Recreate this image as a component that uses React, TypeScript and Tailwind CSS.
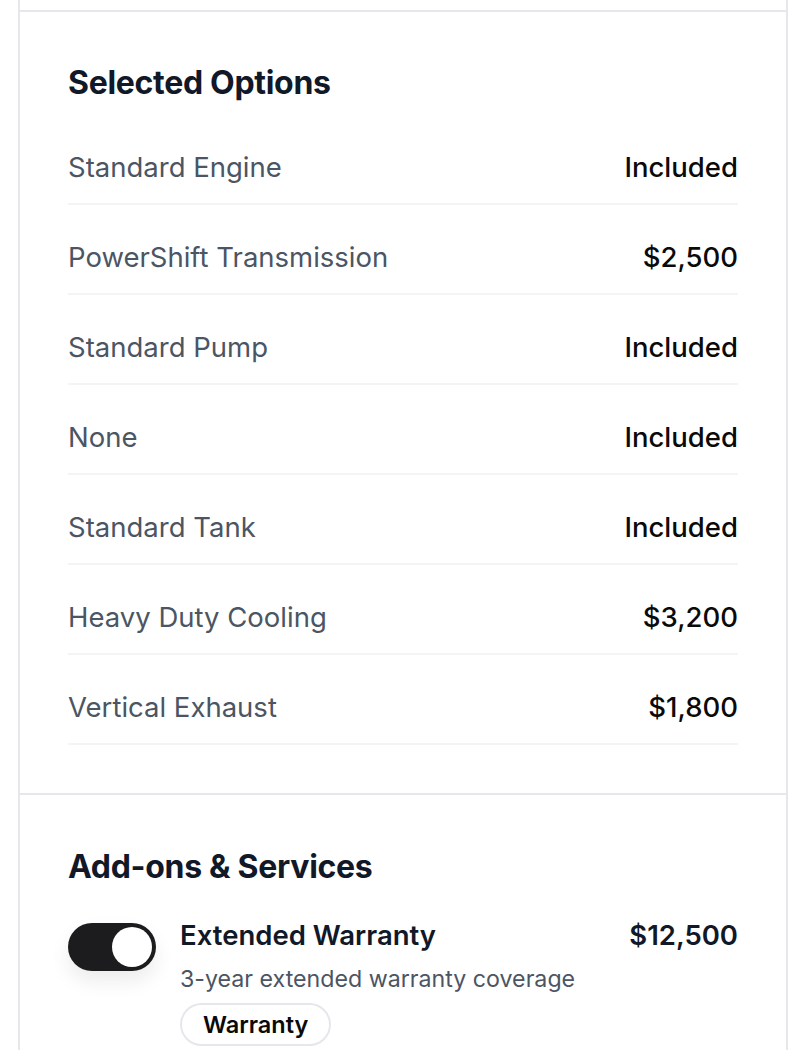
import { useState } from 'react'

const options = [
  { label: 'Standard Engine', price: 'Included' },
  { label: 'PowerShift Transmission', price: '$2,500' },
  { label: 'Standard Pump', price: 'Included' },
  { label: 'None', price: 'Included' },
  { label: 'Standard Tank', price: 'Included' },
  { label: 'Heavy Duty Cooling', price: '$3,200' },
  { label: 'Vertical Exhaust', price: '$1,800' },
]

export default function App() {
  const [warranty, setWarranty] = useState(true)

  return (
    <div className="min-h-[1050px] bg-white font-['Inter',sans-serif] overflow-hidden">
      <div className="ml-[18px] w-[770px] border-x-2 border-[#e5e7eb]">
        <div className="h-[10px]" />
        <section className="border-t-2 border-[#e5e7eb] px-[48px] pt-[50px] pb-[48px]">
          <h2 className="text-[32px] leading-[42px] font-bold text-[#111827] tracking-[-0.3px]">Selected Options</h2>
          <div className="mt-[27px] flex flex-col gap-[16px]">
            {options.map((o) => (
              <div key={o.label} className="flex items-center justify-between pt-[16px] pb-[16px] border-b-2 border-[#f3f4f6]">
                <span className="text-[27.5px] leading-[40px] text-[#4b5563]">{o.label}</span>
                <span className="text-[27.5px] leading-[40px] font-medium text-[#0a0a0a]">{o.price}</span>
              </div>
            ))}
          </div>
        </section>
        <section className="border-t-2 border-[#e5e7eb] px-[48px] pt-[51px] pb-[50px]">
          <h2 className="text-[32px] leading-[42px] font-bold text-[#111827] tracking-[-0.3px]">Add-ons &amp; Services</h2>
          <div className="mt-[35px] flex items-start gap-[24px]">
            <button
              onClick={() => setWarranty((w) => !w)}
              className={`relative w-[88px] h-[48px] rounded-full shrink-0 shadow-[0_10px_20px_rgba(0,0,0,0.08)] ${warranty ? 'bg-[#1c1c1e]' : 'bg-[#e5e7eb]'}`}
            >
              <span className={`absolute top-[4px] w-[40px] h-[40px] rounded-full bg-white ${warranty ? 'left-[44px]' : 'left-[4px]'}`} />
            </button>
            <div className="flex-1 -mt-[8px]">
              <div className="flex justify-between">
                <span className="text-[27.5px] leading-[40px] font-semibold text-[#111827]">Extended Warranty</span>
                <span className="text-[27.5px] leading-[40px] font-semibold text-[#111827]">$12,500</span>
              </div>
              <p className="mt-[8px] text-[23.2px] leading-[32px] text-[#4b5563]">3-year extended warranty coverage</p>
              <span className="mt-[8px] inline-flex items-center h-[43px] px-[21px] rounded-full border-2 border-[#e5e7eb] text-[23.5px] font-semibold text-[#0a0a0a]">Warranty</span>
            </div>
          </div>
        </section>
      </div>
    </div>
  )
}
